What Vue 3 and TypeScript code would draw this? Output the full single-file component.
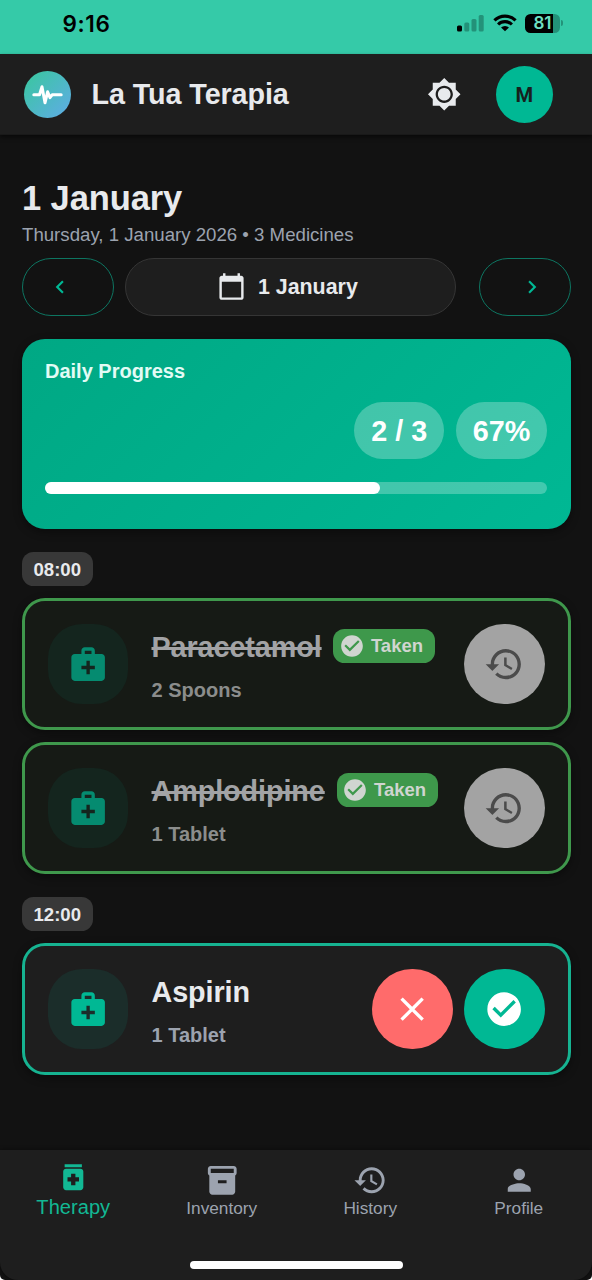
<script setup lang="ts">
interface Dose {
  name: string
  amount: string
  taken: boolean
}
interface Slot {
  time: string
  doses: Dose[]
}
interface Tab {
  label: string
  icon: string
  active?: boolean
}

const icons = {
  sun: 'M20 8.69V4h-4.69L12 .69 8.69 4H4v4.69L.69 12 4 15.31V20h4.69L12 23.31 15.31 20H20v-4.69L23.31 12 20 8.69zM12 18c-3.31 0-6-2.69-6-6s2.69-6 6-6 6 2.69 6 6-2.69 6-6 6zm0-10.4c-2.43 0-4.4 1.97-4.4 4.4s1.97 4.4 4.4 4.4 4.4-1.97 4.4-4.4-1.97-4.4-4.4-4.4z',
  left: 'M15.41 7.41 14 6l-6 6 6 6 1.41-1.41L10.83 12z',
  right: 'M10 6 8.59 7.41 13.17 12l-4.58 4.59L10 18l6-6z',
  calendar: 'M20 3h-1V1h-2v2H7V1H5v2H4c-1.1 0-2 .9-2 2v16c0 1.1.9 2 2 2h16c1.1 0 2-.9 2-2V5c0-1.1-.9-2-2-2zm0 18H4V8h16v13z',
  kit: 'M20 6h-4V4c0-1.1-.9-2-2-2h-4c-1.1 0-2 .9-2 2v2H4c-1.1 0-2 .9-2 2v12c0 1.1.9 2 2 2h16c1.1 0 2-.9 2-2V8c0-1.1-.9-2-2-2zM10 4h4v2h-4V4zm6 11h-3v3h-2v-3H8v-2h3v-3h2v3h3v2z',
  check: 'M12 2C6.48 2 2 6.48 2 12s4.48 10 10 10 10-4.48 10-10S17.52 2 12 2zm-2 15-5-5 1.41-1.41L10 14.17l7.59-7.59L19 8l-9 9z',
  close: 'M19 6.41 17.59 5 12 10.59 6.41 5 5 6.41 10.59 12 5 17.59 6.41 19 12 13.41 17.59 19 19 17.59 13.41 12z',
  history: 'M13 3c-4.97 0-9 4.03-9 9H1l3.89 3.89.07.14L9 12H6c0-3.87 3.13-7 7-7s7 3.13 7 7-3.13 7-7 7c-1.93 0-3.68-.79-4.94-2.06l-1.42 1.42C8.27 19.99 10.51 21 13 21c4.97 0 9-4.03 9-9s-4.03-9-9-9zm-1 5v5l4.28 2.54.72-1.21-3.5-2.08V8H12z',
  pills: 'M6 3h12v2H6zm11 3H7c-1.1 0-2 .9-2 2v11c0 1.1.9 2 2 2h10c1.1 0 2-.9 2-2V8c0-1.1-.9-2-2-2zm-1 9h-2.5v2.5h-3V15H8v-3h2.5V9.5h3V12H16v3z',
  box: 'M20 2H4c-1 0-2 .9-2 2v3.01c0 .72.43 1.34 1 1.69V20c0 1.1 1.1 2 2 2h14c.9 0 2-.9 2-2V8.7c.57-.35 1-.97 1-1.69V4c0-1.1-1-2-2-2zm-5 12H9v-2h6v2zm5-7H4V4l16-.02V7z',
  person: 'M12 12c2.21 0 4-1.79 4-4s-1.79-4-4-4-4 1.79-4 4 1.79 4 4 4zm0 2c-2.67 0-8 1.34-8 4v2h16v-2c0-2.66-5.33-4-8-4z',
}

const slots: Slot[] = [
  {
    time: '08:00',
    doses: [
      { name: 'Paracetamol', amount: '2 Spoons', taken: true },
      { name: 'Amplodipine', amount: '1 Tablet', taken: true },
    ],
  },
  { time: '12:00', doses: [{ name: 'Aspirin', amount: '1 Tablet', taken: false }] },
]

const tabs: Tab[] = [
  { label: 'Therapy', icon: icons.pills, active: true },
  { label: 'Inventory', icon: icons.box },
  { label: 'History', icon: icons.history },
  { label: 'Profile', icon: icons.person },
]

const all = slots.flatMap((s) => s.doses)
const done = all.filter((d) => d.taken).length
const percent = Math.round((done / all.length) * 100)
</script>

<template>
  <div class="screen">
    <div class="status">
      <span class="clock">9:16</span>
      <div class="indicators">
        <svg class="signal" viewBox="0 0 27 18">
          <rect x="0" y="11.5" width="5" height="6" rx="1.5" fill="#000" />
          <g fill="#239279">
            <rect x="7.3" y="8.5" width="5" height="9" rx="1.5" />
            <rect x="14.5" y="5" width="5" height="12.5" rx="1.5" />
            <rect x="21.7" y="1" width="5" height="16.5" rx="1.5" />
          </g>
        </svg>
        <svg class="wifi" viewBox="0 0 24 18">
          <g fill="none" stroke="#000" stroke-width="3.1">
            <path d="M1.4 6.4a15.2 15.2 0 0 1 21.2 0" />
            <path d="M5.1 10.5a9.8 9.8 0 0 1 13.8 0" />
          </g>
          <path d="M12 17.3 8 13.6a5.8 5.8 0 0 1 8 0z" />
        </svg>
        <div class="battery"><span>81</span></div>
        <i class="battery-tip"></i>
      </div>
    </div>

    <header class="topbar">
      <div class="logo">
        <svg viewBox="0 0 47 47">
          <path
            d="M9.8 23.8h5.7l2.5-8 3 16 2.6-11 2.4 5.8 2.2-2.8h9"
            fill="none"
            stroke="#fff"
            stroke-width="3"
            stroke-linecap="round"
            stroke-linejoin="round"
          />
        </svg>
      </div>
      <h1>La Tua Terapia</h1>
      <svg class="sun" viewBox="0 0 24 24"><path :d="icons.sun" /></svg>
      <div class="avatar">M</div>
    </header>

    <main>
      <h2>1 January</h2>
      <p class="subtitle">Thursday, 1 January 2026 • 3 Medicines</p>

      <div class="date-row">
        <button class="step prev"><svg viewBox="0 0 24 24"><path :d="icons.left" /></svg></button>
        <button class="day">
          <svg viewBox="0 0 24 24"><path :d="icons.calendar" /></svg>
          <span>1 January</span>
        </button>
        <button class="step next"><svg viewBox="0 0 24 24"><path :d="icons.right" /></svg></button>
      </div>

      <section class="progress">
        <div class="progress-title">Daily Progress</div>
        <div class="chips">
          <span>{{ done }} / {{ all.length }}</span>
          <span>{{ percent }}%</span>
        </div>
        <div class="track"><div class="fill" :style="{ width: (done / all.length) * 100 + '%' }"></div></div>
      </section>

      <section v-for="slot in slots" :key="slot.time" class="slot">
        <div class="time">{{ slot.time }}</div>
        <article v-for="dose in slot.doses" :key="dose.name" class="card" :class="{ taken: dose.taken }">
          <div class="kit"><svg viewBox="0 0 24 24"><path :d="icons.kit" /></svg></div>
          <div class="info">
            <div class="name-row">
              <span class="name">{{ dose.name }}</span>
              <span v-if="dose.taken" class="badge">
                <svg viewBox="0 0 24 24"><path :d="icons.check" /></svg>
                <span>Taken</span>
              </span>
            </div>
            <div class="amount">{{ dose.amount }}</div>
          </div>
          <div class="actions">
            <button v-if="dose.taken" class="round undo"><svg viewBox="0 0 24 24"><path :d="icons.history" /></svg></button>
            <template v-else>
              <button class="round skip"><svg viewBox="0 0 24 24"><path :d="icons.close" /></svg></button>
              <button class="round take"><svg viewBox="0 0 24 24"><path :d="icons.check" /></svg></button>
            </template>
          </div>
        </article>
      </section>
    </main>

    <nav>
      <div class="tabs">
        <div v-for="tab in tabs" :key="tab.label" class="tab" :class="{ active: tab.active }">
          <svg viewBox="0 0 24 24"><path :d="tab.icon" /></svg>
          <span>{{ tab.label }}</span>
        </div>
      </div>
      <div class="home"></div>
    </nav>
  </div>
</template>

<style>
body {
  margin: 0;
  background: #fff;
}
</style>

<style scoped>
* {
  box-sizing: border-box;
}
.screen {
  width: 592px;
  height: 1280px;
  display: flex;
  flex-direction: column;
  overflow: hidden;
  background: #121212;
  border-radius: 0 0 5px 5px;
  font-family: 'Liberation Sans', Arial, sans-serif;
  color: #e8eaed;
}
svg {
  display: block;
  fill: currentColor;
  flex: none;
}
h1,
h2,
p {
  margin: 0;
}
button {
  padding: 0;
  border: 0;
  background: none;
  font-family: inherit;
  color: inherit;
  display: flex;
  align-items: center;
  justify-content: center;
}

.status {
  height: 54px;
  flex: none;
  display: flex;
  justify-content: space-between;
  background: #35caa8;
  color: #000;
  padding: 0 29px 0 62.5px;
}
.clock {
  font: 600 22.5px/28px Inter, sans-serif;
  padding-top: 10px;
  letter-spacing: 0.6px;
}
.indicators {
  display: flex;
  align-items: flex-start;
  padding-top: 14px;
}
.signal {
  width: 27px;
  height: 18px;
  margin-right: 9px;
}
.wifi {
  width: 24px;
  height: 18px;
  margin-right: 8px;
}
.battery {
  width: 35px;
  height: 18.5px;
  border-radius: 5.5px;
  background: linear-gradient(90deg, #000 28px, #239279 28px);
  color: #6fe0c4;
  font: 600 17px/19px Inter, sans-serif;
  text-align: center;
}
.battery-tip {
  width: 2px;
  height: 6px;
  margin: 6px 0 0 1px;
  border-radius: 0 2px 2px 0;
  background: #239279;
}

.topbar {
  height: 80.5px;
  flex: none;
  display: flex;
  align-items: center;
  padding: 1px 39px 0 24px;
  background: #1e1e1e;
  border-bottom: 1px solid #191919;
  box-shadow: 0 2px 4px rgba(0, 0, 0, 0.55);
}
.logo {
  width: 47px;
  height: 47px;
  border-radius: 50%;
  background: linear-gradient(135deg, #3cc5a4 10%, #5caee0 90%);
}
h1 {
  flex: 1;
  margin-left: 20.5px;
  font-size: 28.75px;
  line-height: 36px;
  font-weight: 700;
  letter-spacing: -0.1px;
}
.sun {
  width: 34.5px;
  height: 34.5px;
  margin-right: 34.5px;
}
.avatar {
  width: 57.5px;
  height: 57.5px;
  border-radius: 50%;
  background: #00b894;
  color: #17211e;
  font: 700 20.125px/58px Roboto, sans-serif;
  text-align: center;
}

main {
  flex: 1;
  padding: 43px 21.5px 0 22px;
}
h2 {
  font-size: 34.5px;
  line-height: 41px;
  letter-spacing: -0.1px;
}
.subtitle {
  margin-top: 2.5px;
  font-size: 18.65px;
  line-height: 28px;
  color: #9ca3af;
}
.date-row {
  display: flex;
  margin-top: 8.8px;
  height: 58px;
}
.step {
  width: 91.8px;
  border: 1.5px solid #0d7561;
  border-radius: 29px;
  color: #00b894;
}
.step svg {
  width: 26px;
  height: 26px;
}
.prev {
  padding-right: 15px;
}
.next {
  padding-left: 15px;
}
.day {
  flex: 1;
  margin: 0 23px 0 11.7px;
  padding-right: 6px;
  gap: 11.5px;
  border: 1.5px solid #353535;
  border-radius: 29px;
  background: #1e1e1e;
  font-size: 21.4px;
  line-height: 26px;
  font-weight: 700;
}
.day svg {
  width: 29px;
  height: 29px;
}

.progress {
  margin-top: 23px;
  height: 190px;
  padding: 18.9px 23.3px 0 23px;
  border-radius: 23px;
  background: linear-gradient(135deg, #00a884 0%, #00b894 100%);
  box-shadow: 0 3px 8px rgba(0, 0, 0, 0.4);
  color: #fff;
  font-weight: 700;
}
.progress-title {
  font-size: 20px;
  line-height: 26px;
  color: #e3fbf5;
}
.chips {
  display: flex;
  justify-content: flex-end;
  gap: 11.5px;
  margin-top: 18.3px;
}
.chips span {
  height: 57.5px;
  padding: 0 17px;
  border-radius: 29px;
  background: rgba(255, 255, 255, 0.26);
  font-size: 28.75px;
  line-height: 58px;
}
.track {
  margin-top: 22.7px;
  height: 11.5px;
  border-radius: 6px;
  background: rgba(255, 255, 255, 0.26);
}
.fill {
  height: 100%;
  border-radius: 6px;
  background: #fff;
}

.slot {
  padding-top: 23px;
}
.time {
  width: max-content;
  height: 34.5px;
  padding: 0 11.5px;
  border-radius: 11.5px;
  background: #383838;
  font-size: 18.6px;
  line-height: 35px;
  font-weight: 700;
}
.card {
  display: flex;
  height: 132px;
  margin-top: 11.8px;
  padding: 22.7px 23px 22.7px 22.5px;
  border: 3px solid #16b391;
  border-radius: 23px;
  background: #1e1e1e;
  box-shadow: 0 3px 8px rgba(0, 0, 0, 0.4);
}
.card.taken {
  border-color: #3f984c;
  background: #161a15;
}
.kit {
  width: 80.5px;
  height: 80.5px;
  display: grid;
  place-items: center;
  border-radius: 34px;
  background: #1b2d2a;
  color: #00b894;
}
.taken .kit {
  background: #14251e;
  color: #058b70;
}
.kit svg,
.round svg {
  width: 40.25px;
  height: 40.25px;
}
.info {
  flex: 1;
  margin-left: 23.5px;
  padding-top: 5px;
  font-weight: 700;
}
.name-row {
  display: flex;
  align-items: center;
  height: 34.5px;
}
.name {
  padding-top: 2.6px;
  font-size: 28.75px;
  line-height: 34.5px;
  letter-spacing: -0.08px;
}
.taken .name {
  color: #a2a3a5;
  text-decoration: line-through;
  text-decoration-thickness: 2.5px;
  text-decoration-skip-ink: none;
}
.badge {
  display: flex;
  align-items: center;
  height: 34.5px;
  margin-left: 11.8px;
  padding: 0 12px 0 5.5px;
  gap: 6px;
  border-radius: 11.5px;
  background: #3e984b;
  color: #d0d5d0;
  font-size: 18.5px;
  line-height: 34.5px;
}
.badge > span {
  padding-top: 1px;
}
.badge svg {
  width: 26px;
  height: 26px;
}
.amount {
  margin-top: 12.8px;
  font-size: 20px;
  line-height: 28px;
  color: #9ca3af;
}
.taken .amount {
  color: #8b8d8c;
}
.actions {
  display: flex;
  gap: 11.5px;
}
.round {
  width: 80.5px;
  height: 80.5px;
  border-radius: 50%;
  color: #fff;
}
.undo {
  background: #a3a3a3;
  color: #4b4b4b;
}
.skip {
  background: #ff6b6b;
}
.take {
  background: #00b894;
}

nav {
  flex: none;
  height: 130.5px;
  position: relative;
  display: flex;
  flex-direction: column;
  align-items: center;
  background: #1e1e1e;
  border-radius: 0 0 18px 18px;
  box-shadow: 0 0 4px rgba(0, 0, 0, 0.5);
}
.tabs {
  display: flex;
  width: 594px;
  height: 111px;
}
.tab {
  flex: 1;
  display: flex;
  flex-direction: column;
  align-items: center;
  padding-top: 13.5px;
  font-size: 17.25px;
  line-height: 21px;
  color: #9ca3af;
}
.tab svg {
  width: 34.5px;
  height: 34.5px;
}
.tab.active {
  padding-top: 10.9px;
  font-size: 20.125px;
  line-height: 25.5px;
  color: #12b894;
}
.home {
  width: 213px;
  height: 8px;
  border-radius: 4px;
  background: #fff;
}
</style>
